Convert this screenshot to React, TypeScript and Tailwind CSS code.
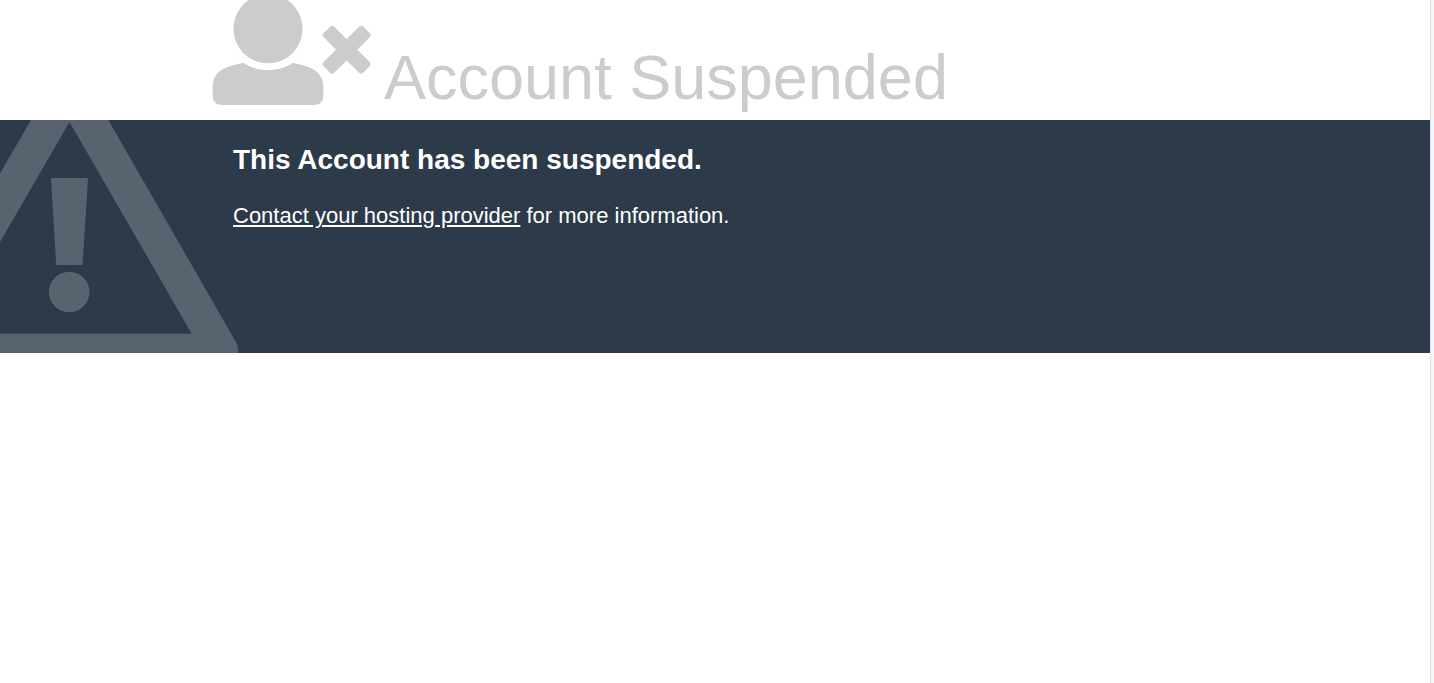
function UserTimesIcon() {
  return (
    <svg viewBox="12 0 160 105" className="w-[160px] h-[105px] shrink-0 fill-current" aria-hidden="true">
      <circle cx="68" cy="28.7" r="34.6" />
      <path d="M43.3 62.7C50 67.500 58.500 70 68 70S86 67.500 92.700 62.700C110 66.500 123.300 70 123.300 88V96Q123 105 113.500 105H22.500Q13 105 12.700 96V88C12.700 70 26 66.500 43.300 62.700Z" />
      <g transform="translate(146.700 49.700)">
        <rect x="-28" y="-7.500" width="56" height="15" rx="3" transform="rotate(45)" />
        <rect x="-28" y="-7.500" width="56" height="15" rx="3" transform="rotate(-45)" />
      </g>
    </svg>
  );
}

function WarningIcon() {
  return (
    <svg viewBox="0 0 233 233" className="w-[233px] h-[233px] shrink-0 overflow-visible fill-[#59636f]" aria-hidden="true">
      <path
        fillRule="evenodd"
        d="M31 0H108.300L236.500 223Q238 226 238 229V233H0V213.700H191.700L69.500 2L0 122V53.500Z"
      />
      <path d="M51 58H88L82.500 145H56.200Z" />
      <circle cx="69.200" cy="172" r="20.300" />
    </svg>
  );
}

export default function App() {
  return (
    <div className="flex min-h-screen bg-white font-['Liberation_Sans',Arial,sans-serif]">
      <div className="flex-1 min-w-0">
        <header className="flex items-end gap-3 pl-[212px] pb-[15px] text-[#cccccc]">
          <UserTimesIcon />
          <h1 className="text-[63px] leading-[63px] -mb-1">Account Suspended</h1>
        </header>

        <main className="flex bg-[#2d3a49] text-white overflow-hidden">
          <WarningIcon />
          <div className="min-w-0 pt-6">
            <h2 className="text-[28px] leading-8 font-bold">This Account has been suspended.</h2>
            <p className="mt-6 text-[22px] leading-8">
              <a href="#contact" className="underline">
                Contact your hosting provider
              </a>{" "}
              for more information.
            </p>
          </div>
        </main>
      </div>

      {/* Scrollbar gutter */}
      <div className="w-1 shrink-0 border-l border-[#e2e2e4] bg-[#f6f6f8]" />
    </div>
  );
}
